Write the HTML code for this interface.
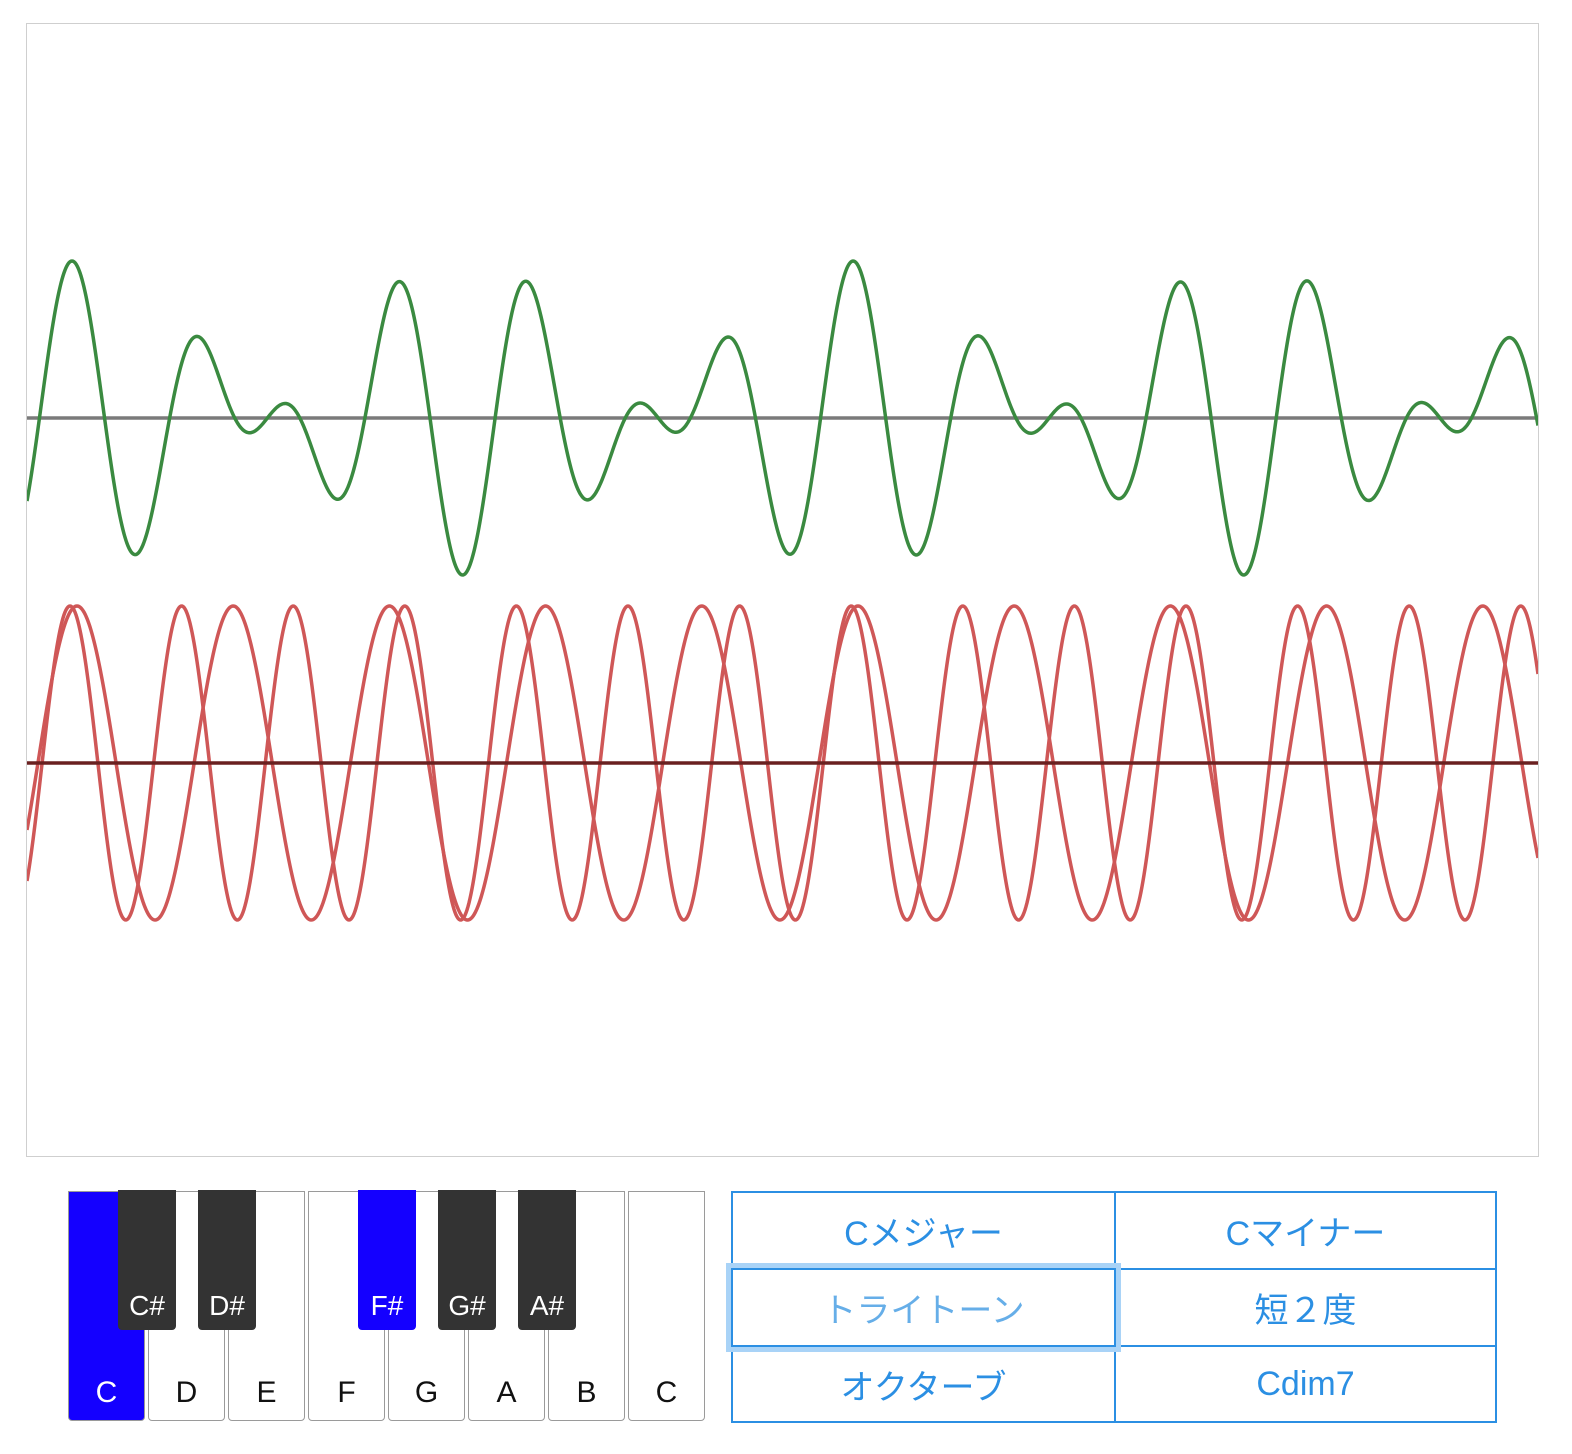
<!DOCTYPE html>
<html><head><meta charset="utf-8">
<style>
html,body{margin:0;padding:0;background:#fff;width:1572px;height:1454px;overflow:hidden;font-family:"Liberation Sans","Noto Sans CJK JP",sans-serif}
#cv{position:absolute;left:26px;top:23px;width:1511px;height:1132px;border:1px solid #cfcfcf}
.wk{position:absolute;top:1191px;width:77px;height:230px;border:1.5px solid #9a9a9a;border-radius:0 0 4px 4px;background:#fff;box-sizing:border-box;text-align:center;font-size:30px;color:#111;line-height:1}
.wk span{position:absolute;left:0;right:0;top:186px}
.bk{position:absolute;top:1190px;width:58px;height:140px;background:#333;border-radius:0 0 4px 4px;color:#fff;font-size:28px;text-align:center;line-height:1}
.bk span{position:absolute;left:0;right:0;top:102px}
.btn{position:absolute;box-sizing:border-box;border:2px solid #2b8fe3;color:#2b8fe3;font-size:34px;display:flex;align-items:center;justify-content:center;background:#fff}
</style></head><body>
<div id="cv"><svg id="sv" width="1511" height="1132" viewBox="27 24 1511 1132" style="display:block"></svg></div>

<div class="wk" style="left:68px;background:#1400ff;color:#fff;border-color:#9a9a9a"><span>C</span></div>
<div class="wk" style="left:148px"><span>D</span></div>
<div class="wk" style="left:228px"><span>E</span></div>
<div class="wk" style="left:308px"><span>F</span></div>
<div class="wk" style="left:388px"><span>G</span></div>
<div class="wk" style="left:468px"><span>A</span></div>
<div class="wk" style="left:548px"><span>B</span></div>
<div class="wk" style="left:628px"><span>C</span></div>
<div class="bk" style="left:118px"><span>C#</span></div>
<div class="bk" style="left:198px"><span>D#</span></div>
<div class="bk" style="left:358px;background:#1400ff"><span>F#</span></div>
<div class="bk" style="left:438px"><span>G#</span></div>
<div class="bk" style="left:518px"><span>A#</span></div>

<div class="btn" style="left:731px;top:1191px;width:385px;height:79px">Cメジャー</div>
<div class="btn" style="left:1114px;top:1191px;width:383px;height:79px">Cマイナー</div>
<div class="btn" style="left:1114px;top:1268px;width:383px;height:79px">短２度</div>
<div class="btn" style="left:731px;top:1345px;width:385px;height:78px">オクターブ</div>
<div class="btn" style="left:1114px;top:1345px;width:383px;height:78px">Cdim7</div>
<div class="btn" style="left:731px;top:1268px;width:385px;height:79px;color:#66aee8;box-shadow:0 0 0 5px #a9d3f7;z-index:2">トライトーン</div>

<script>
var sv=document.getElementById('sv');
var P1=111.6,P2=156.2;
function c(x,p,P){return Math.cos(2*Math.PI*(x-p)/P)}
function path(fn,col,w){var d='';for(var x=27;x<=1538;x+=1){d+=(x==27?'M':'L')+x+' '+fn(x).toFixed(2)+' ';}
var p=document.createElementNS('http://www.w3.org/2000/svg','path');p.setAttribute('d',d);p.setAttribute('fill','none');p.setAttribute('stroke',col);p.setAttribute('stroke-width',w);sv.appendChild(p);}
function line(y,col,w){var l=document.createElementNS('http://www.w3.org/2000/svg','line');l.setAttribute('x1',27);l.setAttribute('x2',1538);l.setAttribute('y1',y);l.setAttribute('y2',y);l.setAttribute('stroke',col);l.setAttribute('stroke-width',w);sv.appendChild(l);}
line(418,'#7a7a7a',3.5);
path(function(x){return 418-78.5*(c(x,72,P1)+c(x,72,P2))},'#3a8a40',3.5);
path(function(x){return 763-157*c(x,70,P1)},'#cf5757',3.5);
path(function(x){return 763-157*c(x,77,P2)},'#cf5757',3.5);
line(763,'#6a2020',3.5);
</script>
</body></html>
